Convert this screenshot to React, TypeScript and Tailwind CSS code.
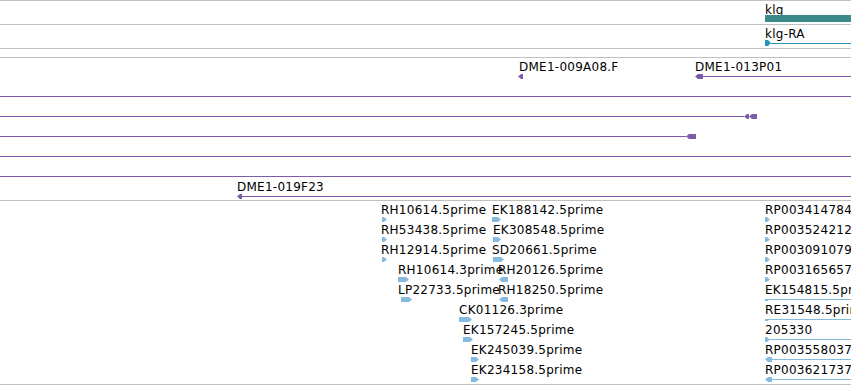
import React from "react";

const PURPLE = "#7b5ca8";
const BLUE = "#86bbdf";

function Arrow({
  w,
  dir,
  color,
  h = 5,
}: {
  w: number;
  dir: "r" | "l";
  color: string;
  h?: number;
}) {
  const tip = Math.min(3, w - 1);
  const pts =
    dir === "r"
      ? `0,0 ${w - tip},0 ${w},${h / 2} ${w - tip},${h} 0,${h}`
      : `${w},0 ${tip},0 0,${h / 2} ${tip},${h} ${w},${h}`;
  return (
    <svg className="shrink-0" width={w} height={h} viewBox={`0 0 ${w} ${h}`}>
      <polygon points={pts} fill={color} />
    </svg>
  );
}

function Line({ color, width }: { color: string; width?: number }) {
  return (
    <div
      className={width === undefined ? "h-px flex-1" : "h-px shrink-0"}
      style={{ background: color, width }}
    />
  );
}

/* A feature sits on the track's genome canvas at its coordinate x:
   label on top, glyph row below it. */
function Feature({
  x,
  label,
  toEdge,
  children,
}: {
  x: number;
  label?: string;
  toEdge?: boolean;
  children: React.ReactNode;
}) {
  return (
    <div
      className="absolute top-0 flex flex-col pt-[2px]"
      style={{ left: x, right: toEdge ? 0 : undefined }}
    >
      {label ? (
        <span className="whitespace-nowrap leading-[14px] text-black">{label}</span>
      ) : (
        <span className="h-[14px]" />
      )}
      <div className="flex h-[5px] items-center">{children}</div>
    </div>
  );
}

function Row({ children }: { children?: React.ReactNode }) {
  return <div className="relative h-[20px] shrink-0">{children}</div>;
}

type Est = { x: number; off: number; w: number; dir: "r" | "l"; t: string };

const estRows: { left: Est[]; right: { t: string; kind: "small" | "tick" | "rline" | "lline" } }[] = [
  {
    left: [
      { x: 381, off: 1, w: 5, dir: "r", t: "RH10614.5prime" },
      { x: 492, off: 0, w: 9, dir: "r", t: "EK188142.5prime" },
    ],
    right: { t: "RP003414784", kind: "small" },
  },
  {
    left: [
      { x: 381, off: 1, w: 5, dir: "r", t: "RH53438.5prime" },
      { x: 493, off: 0, w: 8, dir: "r", t: "EK308548.5prime" },
    ],
    right: { t: "RP003524212", kind: "small" },
  },
  {
    left: [
      { x: 381, off: 1, w: 5, dir: "r", t: "RH12914.5prime" },
      { x: 492, off: 1, w: 11, dir: "r", t: "SD20661.5prime" },
    ],
    right: { t: "RP003091079", kind: "small" },
  },
  {
    left: [
      { x: 398, off: 0, w: 11, dir: "r", t: "RH10614.3prime" },
      { x: 498, off: 1, w: 9, dir: "l", t: "RH20126.5prime" },
    ],
    right: { t: "RP003165657", kind: "small" },
  },
  {
    left: [
      { x: 398, off: 3, w: 11, dir: "r", t: "LP22733.5prime" },
      { x: 498, off: 1, w: 9, dir: "l", t: "RH18250.5prime" },
    ],
    right: { t: "EK154815.5prime", kind: "tick" },
  },
  { left: [{ x: 459, off: 0, w: 13, dir: "r", t: "CK01126.3prime" }], right: { t: "RE31548.5prime", kind: "tick" } },
  { left: [{ x: 463, off: 0, w: 10, dir: "r", t: "EK157245.5prime" }], right: { t: "205330", kind: "rline" } },
  { left: [{ x: 471, off: 0, w: 8, dir: "r", t: "EK245039.5prime" }], right: { t: "RP003558037", kind: "lline" } },
  { left: [{ x: 471, off: 0, w: 8, dir: "r", t: "EK234158.5prime" }], right: { t: "RP003621737", kind: "lline" } },
];

export default function App() {
  return (
    <div className="flex h-[385px] w-[851px] flex-col overflow-hidden bg-white font-['DejaVu_Sans',sans-serif] text-[12px] tracking-[0.25px]">
      {/* gene track */}
      <div className="relative h-[24px] shrink-0 border-t border-[#c0c0c0]">
        <div className="absolute left-[765px] right-0 top-0 flex flex-col pt-[2px]">
          <span className="leading-[14px] text-black">klg</span>
          <div className="-mt-[2px] h-[7px] bg-[#3a8a8c]" />
        </div>
      </div>
      {/* transcript track */}
      <div className="relative h-[24px] shrink-0 border-t border-[#c0c0c0]">
        <div className="absolute left-[765px] right-0 top-0 flex flex-col pt-[2px]">
          <span className="leading-[14px] text-black">klg-RA</span>
          <div className="-mt-[1px] flex h-[6px] items-center">
            <Arrow w={6} h={6} dir="r" color="#2a92b8" />
            <Line color="#2a92b8" />
          </div>
        </div>
      </div>
      {/* empty track */}
      <div className="h-[9px] shrink-0 border-t border-[#c0c0c0]" />
      {/* clone track */}
      <div className="flex h-[143px] shrink-0 flex-col border-t border-[#c0c0c0]">
        <Row>
          <Feature x={519} label="DME1-009A08.F">
            <div className="-ml-px flex">
              <Arrow w={5} dir="l" color={PURPLE} />
            </div>
          </Feature>
          <Feature x={695} label="DME1-013P01" toEdge>
            <Arrow w={8} dir="l" color={PURPLE} />
            <Line color={PURPLE} />
          </Feature>
        </Row>
        <Row>
          <Feature x={0} toEdge>
            <Line color={PURPLE} />
          </Feature>
        </Row>
        <Row>
          <Feature x={0}>
            <Line color={PURPLE} width={744} />
            <Arrow w={5} dir="l" color={PURPLE} />
            <Arrow w={8} dir="l" color={PURPLE} />
          </Feature>
        </Row>
        <Row>
          <Feature x={0}>
            <Line color={PURPLE} width={686} />
            <Arrow w={10} dir="l" color={PURPLE} />
          </Feature>
        </Row>
        <Row>
          <Feature x={0} toEdge>
            <Line color={PURPLE} />
          </Feature>
        </Row>
        <Row>
          <Feature x={0} toEdge>
            <Line color={PURPLE} />
          </Feature>
        </Row>
        <Row>
          <Feature x={237} label="DME1-019F23" toEdge>
            <Arrow w={5} dir="l" color={PURPLE} />
            <Line color={PURPLE} />
          </Feature>
        </Row>
      </div>
      {/* EST track */}
      <div className="flex h-[185px] shrink-0 flex-col border-y border-[#c0c0c0]">
        {estRows.map((r, i) => (
          <Row key={i}>
            {r.left.map((e, j) => (
              <Feature key={j} x={e.x} label={e.t}>
                <div className="flex" style={{ paddingLeft: e.off }}>
                  <Arrow w={e.w} dir={e.dir} color={BLUE} />
                </div>
              </Feature>
            ))}
            <Feature x={765} label={r.right.t} toEdge={r.right.kind !== "small"}>
              {r.right.kind === "small" && <Arrow w={5} dir="r" color={BLUE} />}
              {r.right.kind === "tick" && (
                <>
                  <div className="h-[2px] w-[3px] shrink-0 bg-[#86bbdf]" />
                  <Line color={BLUE} />
                </>
              )}
              {r.right.kind === "rline" && (
                <>
                  <Arrow w={5} dir="r" color={BLUE} />
                  <Line color={BLUE} />
                </>
              )}
              {r.right.kind === "lline" && (
                <>
                  <Arrow w={7} dir="l" color={BLUE} />
                  <Line color={BLUE} />
                </>
              )}
            </Feature>
          </Row>
        ))}
      </div>
    </div>
  );
}
